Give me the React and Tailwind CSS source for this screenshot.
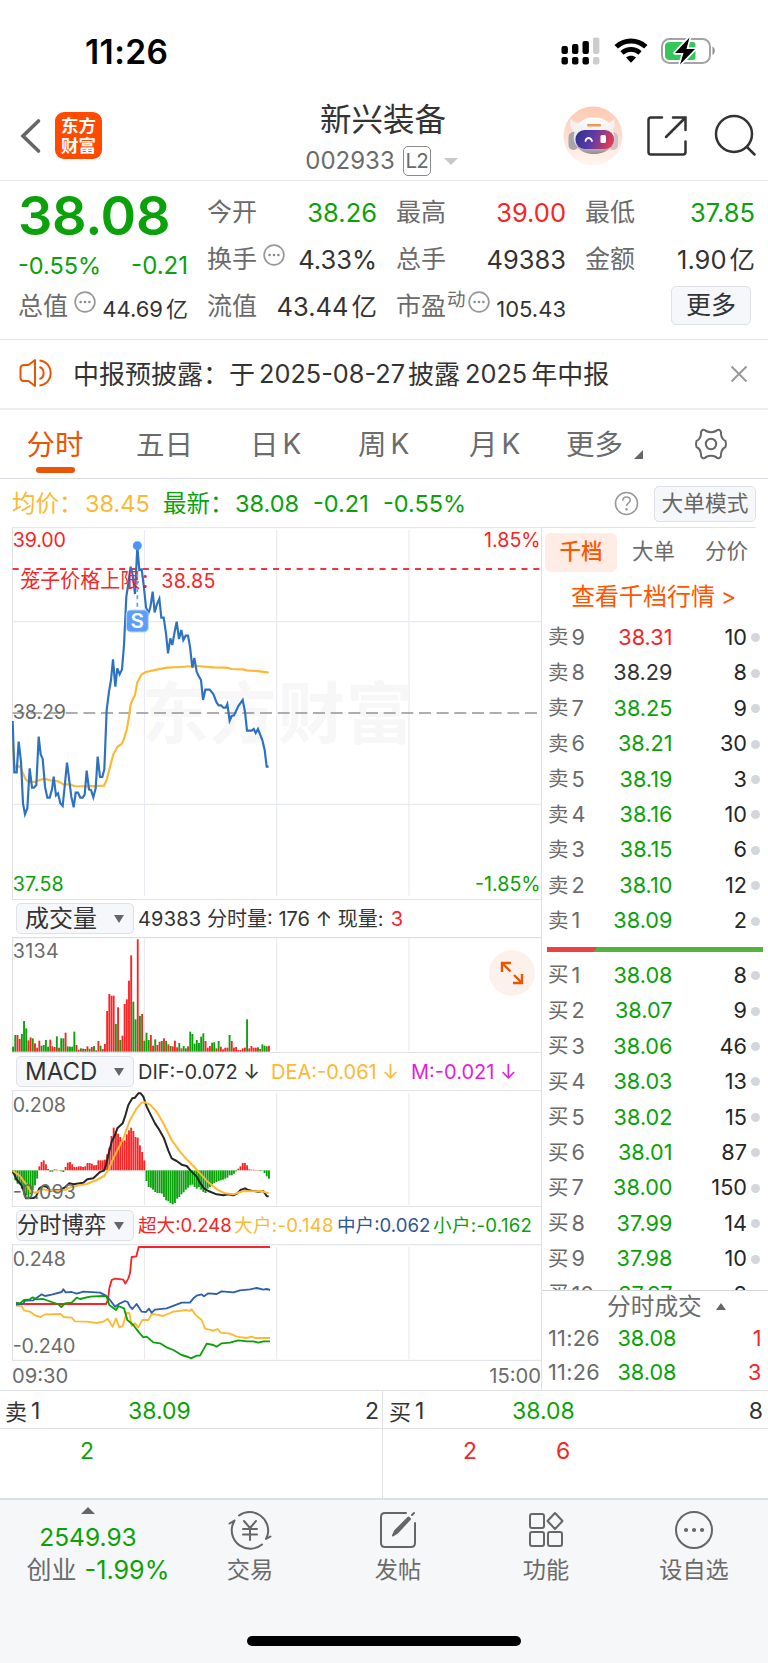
import React from "react";

const GREEN = "#0aa10a";
const RED = "#f82425";

// order book
const sells = [
  ["卖9", "38.31", "10", "text-[#f82425]"],
  ["卖8", "38.29", "8", "text-[#333333]"],
  ["卖7", "38.25", "9", "text-[#0aa10a]"],
  ["卖6", "38.21", "30", "text-[#0aa10a]"],
  ["卖5", "38.19", "3", "text-[#0aa10a]"],
  ["卖4", "38.16", "10", "text-[#0aa10a]"],
  ["卖3", "38.15", "6", "text-[#0aa10a]"],
  ["卖2", "38.10", "12", "text-[#0aa10a]"],
  ["卖1", "38.09", "2", "text-[#0aa10a]"],
];

const buys = [
  ["买1", "38.08", "8", "text-[#0aa10a]"],
  ["买2", "38.07", "9", "text-[#0aa10a]"],
  ["买3", "38.06", "46", "text-[#0aa10a]"],
  ["买4", "38.03", "13", "text-[#0aa10a]"],
  ["买5", "38.02", "15", "text-[#0aa10a]"],
  ["买6", "38.01", "87", "text-[#0aa10a]"],
  ["买7", "38.00", "150", "text-[#0aa10a]"],
  ["买8", "37.99", "14", "text-[#0aa10a]"],
  ["买9", "37.98", "10", "text-[#0aa10a]"],
  ["买10", "37.97", "8", "text-[#0aa10a]"],
];

// chart series, three units to a pixel
const priceLine =
  "38,603 43,757 50,757 56,665 63,725 69,850 75,883 82,865 89,745 96,803 102,803 109,795 116,650 122,703 128,716 135,800 142,833 149,833 156,808 161,770 168,826 174,820 181,850 188,858 194,800 201,728 207,775 214,830 221,862 227,818 234,818 241,833 248,833 254,824 260,752 267,808 273,810 280,832 287,805 293,710 300,771 307,771 313,748 320,570 327,515 333,480 339,418 346,500 352,445 359,463 366,448 372,375 379,230 385,190 392,140 398,165 405,222 412,80 418,150 425,148 431,195 438,262 445,280 451,262 458,215 464,277 471,252 478,236 484,293 491,293 498,340 504,400 511,355 517,375 524,335 530,305 537,357 544,330 550,360 557,347 564,347 570,380 577,443 583,414 590,455 597,470 603,480 609,540 616,509 629,509 640,522 650,548 656,556 663,556 670,563 677,563 682,552 689,602 695,588 702,586 715,558 728,540 735,575 741,632 755,632 761,627 767,639 774,627 787,660 794,690 800,740 806,740";
const avgLine =
  "38,665 43,735 50,745 57,738 63,745 69,760 77,778 85,785 103,786 118,780 135,776 150,781 175,784 190,793 210,793 222,798 260,799 312,797 320,780 330,740 340,703 352,681 366,671 372,655 380,630 387,590 392,553 398,538 405,525 412,487 425,463 438,456 470,449 500,443 540,441 590,438 640,442 680,443 695,447 728,448 740,451 780,454 806,458";
const difLine =
  "38,122 48,145 55,155 64,165 70,180 78,205 100,204 108,200 118,175 130,168 140,170 150,182 180,180 195,172 208,160 220,163 250,158 262,148 280,145 300,126 312,122 318,105 325,75 335,35 345,15 352,-5 368,-20 375,-40 385,-75 397,-95 405,-97 415,-110 422,-110 430,-100 440,-70 450,-50 465,-20 475,-5 492,25 505,62 515,85 530,93 545,104 560,108 572,122 590,140 600,158 612,175 625,183 650,193 670,196 685,193 700,196 712,190 722,180 735,175 742,179 755,182 775,185 790,183 800,198 806,200";
const deaLine =
  "38,122 60,138 80,165 92,185 110,188 125,178 165,183 195,180 215,170 260,162 290,150 312,138 325,120 340,85 360,45 372,20 390,-30 410,-65 425,-82 435,-83 450,-76 470,-55 490,-20 500,0 515,30 540,65 560,88 580,108 600,130 620,152 650,178 675,190 700,193 730,183 760,184 785,183 806,190";
const superLine =
  "48,522 318,522 324,510 328,475 335,450 345,446 370,449 376,461 385,445 390,430 395,381 409,379 416,351 810,351";
const midLine =
  "48,524 70,521 75,512 100,511 125,493 135,498 155,494 185,486 190,478 197,487 215,486 230,491 250,485 300,488 318,497 330,510 345,530 360,520 375,513 383,516 390,530 397,537 410,522 425,545 438,546 447,536 455,548 465,539 500,535 545,518 570,518 580,505 590,497 605,493 612,499 625,490 650,492 665,484 700,487 720,481 750,478 770,474 790,479 800,477 810,480";
const bigLine =
  "48,527 65,528 72,541 90,545 105,556 122,561 135,553 183,552 190,561 215,563 225,574 260,575 290,579 310,575 323,566 338,590 348,565 358,592 368,588 380,549 388,549 395,588 405,580 415,592 427,570 445,570 455,552 470,554 490,558 520,545 560,540 568,543 575,538 585,553 605,570 615,596 640,602 653,597 662,608 690,611 710,620 740,624 755,620 765,624 810,624";
const smallLine =
  "48,518 60,520 72,510 90,508 98,502 110,508 130,507 155,516 175,523 184,531 195,520 215,518 230,503 240,507 270,500 310,498 320,500 328,525 348,540 355,528 372,535 382,570 400,585 415,605 430,622 440,620 460,637 480,640 500,652 520,660 545,675 565,681 573,685 590,677 600,677 620,641 640,645 650,650 665,640 690,638 715,631 740,634 760,634 775,638 790,634 810,634";

// negative = falling minute, drawn green
const volume = [
  -15, -50, 50, 38, -53, -92, -70, 34, 43, -40, 25, 12, 33, -18, -20, -35, -15, 36, 16, 14, -46, 12, -40, -40, 57, -16,
  -15, -15, -60, 20, 6, -10, 9, -8, 16, -9, 14, -17, 4, 32, -18, 8, 23, 122, 173, 168, 168, -83, 133, -35, 48, 143, 157,
  213, 289, -150, -97, 337, -107, 113, -33, -57, -35, 50, 18, -37, 20, 30, -32, 40, -32, 22, -17, 16, 33, 13, -26, 10,
  -17, -10, 16, -60, -53, -24, -35, -26, -45, -55, 32, 12, 17, -27, -28, 10, -32, 15, 7, 12, 12, -50, 32, 12, 14, 5, 5,
  10, 12, -97, 10, 17, 12, 12, -13, 8, -22, -18, -16, 18,
];

const macd = [
  -10, -30, -40, -42, -55, -70, -75, -80, -72, -60, -45, -25, 12, 25, 30, 18, 4, -4, -4, 3, 2, 1, -3, -5, 10, 23, 25, 18,
  10, 10, 12, 12, 10, 12, 22, 22, 20, 15, 16, 30, 30, 30, 32, 48, 68, 103, 128, 118, 110, 100, 88, 90, 108, 120, 128,
  118, 100, 98, 75, 55, 30, -32, -50, -52, -58, -65, -68, -68, -70, -80, -90, -93, -98, -102, -98, -85, -80, -72, -66,
  -58, -52, -45, -43, -50, -55, -50, -58, -65, -68, -55, -50, -42, -38, -35, -32, -30, -28, -25, -22, -15, -15, -10, -3,
  5, 12, 22, 22, 15, 3, 2, 2, 1, 1, -2, -1, -8, -18, -25,
];

const Bars = ({ data, base }) =>
  data.map((v, i) => (
    <rect
      key={i}
      x={36.5 + i * 6.56}
      y={v > 0 ? base - v : data === volume ? base + v : base}
      width="5.6"
      height={Math.abs(v)}
      fill={v > 0 ? RED : GREEN}
    />
  ));

const Grid = ({ top, bottom }) => (
  <g stroke="#e9ebf2" strokeWidth="3.5">
    <path d={`M433.5 ${top}V${bottom}M830 ${top}V${bottom}M1227 ${top}V${bottom}`} />
  </g>
);

const Dots = () => (
  <svg width="22" height="22" viewBox="0 0 22 22" fill="none" className="shrink-0">
    <circle cx="11" cy="11" r="9.9" stroke="#999" strokeWidth="1.7" />
    <g fill="#888">
      <circle cx="6.6" cy="11" r="1.3" />
      <circle cx="11" cy="11" r="1.3" />
      <circle cx="15.4" cy="11" r="1.3" />
    </g>
  </svg>
);

const StatusBar = () => (
  <div className="flex h-[84px] items-start justify-between pl-[85px] pr-[52px]">
    <div className="mt-[36px] text-[33.5px] font-semibold leading-[33px] tracking-[0.4px] text-black">11:26</div>
    <div className="mt-[36px] flex items-start">
      <svg width="40" height="30" viewBox="0 0 40 30" className="mr-[13px]">
        <rect x="0.5" y="10" width="6.4" height="8" rx="2" />
        <rect x="11" y="8" width="6.4" height="10" rx="2" />
        <rect x="21.5" y="5" width="6.4" height="13" rx="2" />
        <rect x="32" y="1.5" width="6.4" height="16.5" rx="2" fill="#ccc" />
        <rect x="0.5" y="21" width="6.4" height="7.5" rx="2" />
        <rect x="11" y="21" width="6.4" height="7.5" rx="2" />
        <rect x="21.5" y="21" width="6.4" height="7.5" rx="2" />
        <rect x="32" y="21" width="6.4" height="7.5" rx="2" fill="#ccc" />
      </svg>
      <svg width="34" height="30" viewBox="0 0 34 30" fill="none" className="mr-[13px]">
        <path d="M2.2 10.8C10.5 3 23.5 3 31.8 10.8" stroke="#000" strokeWidth="5" />
        <path d="M8 17C13.2 12.2 20.8 12.2 26 17" stroke="#000" strokeWidth="4.6" />
        <path d="M12 21.6C14.8 19 19.2 19 22 21.6L17 26.8Z" fill="#000" />
      </svg>
      <svg width="55" height="30" viewBox="0 0 55 30">
        <rect x="1" y="3" width="48" height="24" rx="7.5" fill="none" stroke="#a3a3a3" strokeWidth="2" />
        <path d="M51.5 10.5c3 1.6 3 7 0 8.6z" fill="#8f8f8f" />
        <path d="M9 6h22.5c2.2 0 3 .8 3 3v12c0 2.2-.8 3-3 3H9c-3.2 0-5-1.3-5-4v-10c0-2.7 1.8-4 5-4z" fill="#34c759" />
        <path d="M28.5 1.5L14 17h8.5L19 28.5L34 13h-8.5z" fill="#000" stroke="#fff" strokeWidth="3.4" paintOrder="stroke" strokeLinejoin="round" />
      </svg>
    </div>
  </div>
);

const Header = () => (
  <div className="flex h-[97px] items-start border-b border-[#e8e8e8] pl-[20px]">
    <svg width="22" height="36" viewBox="0 0 22 36" fill="none" className="mt-[34px]">
      <path d="M18.5 3L3 18L18.5 33" stroke="#666" strokeWidth="3.6" strokeLinecap="round" />
    </svg>
    <div className="ml-[13px] mt-[28px] flex h-[47px] w-[47px] flex-col items-center justify-center rounded-[9px] bg-[#ff4a00] text-[17.5px] font-bold leading-[19.5px] text-white">
      <span>东方</span>
      <span>财富</span>
    </div>
    <div className="ml-[180px] mt-[20px] flex w-[202px] flex-col items-center">
      <div className="text-[31.5px] leading-[32px] text-[#333333]">新兴装备</div>
      <div className="ml-[-3px] mt-[10px] flex items-center text-[24px] leading-[30px] text-[#6b6b6b]">
        <span>002933</span>
        <span className="ml-[8px] flex h-[30px] w-[28px] items-center justify-center rounded-[5px] border border-[#8a8a8a] text-[20.5px] tracking-[-0.8px]">
          L2
        </span>
        <span className="ml-[13px] border-x-[7px] border-t-[7px] border-x-transparent border-t-[#c8c8c8]" />
      </div>
    </div>
    <svg width="60" height="60" viewBox="0 0 60 60" className="ml-[79px] mt-[22px]">
      <defs>
        <linearGradient id="halo" x1="0" y1="0" x2="0" y2="1">
          <stop offset="0" stopColor="#ffc8b0" />
          <stop offset="1" stopColor="#fff6f1" />
        </linearGradient>
        <linearGradient id="helmet" x1="0" y1="0" x2="0" y2="1">
          <stop offset="0" stopColor="#ffffff" />
          <stop offset="0.65" stopColor="#e4e2e6" />
          <stop offset="1" stopColor="#8f8a90" />
        </linearGradient>
        <linearGradient id="visor" x1="0" y1="0" x2="1" y2="0.2">
          <stop offset="0" stopColor="#2d3190" />
          <stop offset="0.5" stopColor="#5b3aa8" />
          <stop offset="1" stopColor="#dc3a55" />
        </linearGradient>
      </defs>
      <circle cx="30" cy="30" r="29.5" fill="url(#halo)" />
      <path d="M8 13c-2 6 0 11 5 13l7-9c-5 1-9 0-12-4zM51 13c2 6 0 11-5 13l-7-9c5 1 9 0 12-4z" fill="#f6f2f1" />
      <rect x="5.5" y="26" width="10" height="18" rx="5" fill="#aaa5aa" />
      <rect x="45" y="26" width="10" height="18" rx="5" fill="#c9c3c5" />
      <path d="M31 11.500c-12 0-18 6-20 17c-2 12 8 19.500 20 19.500s22-7.500 20-19.500c-2-11-8-17-20-17z" fill="url(#helmet)" />
      <rect x="24" y="18" width="14" height="2.6" rx="1.3" fill="#eb9a52" />
      <rect x="12.5" y="24" width="38.500" height="19" rx="9" fill="url(#visor)" />
      <path d="M22.5 35c1-4 5-4 6.5 0" fill="none" stroke="#fff" strokeWidth="1.8" strokeLinecap="round" />
      <rect x="37.500" y="29" width="5.500" height="8" rx="1.5" fill="#fff" />
    </svg>
    <svg width="42" height="42" viewBox="0 0 42 42" fill="none" stroke="#333" strokeWidth="2.5" strokeLinecap="round" className="ml-[23px] mt-[31px]">
      <path d="M16 2.5H5Q2.5 2.500 2.5 5V37Q2.5 39.500 5 39.500H37Q39.500 39.500 39.500 37V26.500M27 2.500H39.500V15M39 3L20 22" />
    </svg>
    <svg width="44" height="44" viewBox="0 0 44 44" fill="none" stroke="#333" strokeWidth="2.5" strokeLinecap="round" className="ml-[26px] mt-[30px]">
      <circle cx="20" cy="20" r="18" />
      <path d="M33 33L40.500 40.500" />
    </svg>
  </div>
);

const Cell = ({ label, value, unit, color = "text-[#333333]", children, small }) => (
  <div className="flex h-[47px] items-center justify-between whitespace-nowrap">
    <div className="flex items-center text-[25px] text-[#6b6b6b]">
      {label}
      {children}
    </div>
    <div className={small ? `pt-[5px] text-[22px] ${color}` : `text-[25.5px] ${color}`}>
      {value}
      {unit && <span className="ml-[3px]">{unit}</span>}
    </div>
  </div>
);

const Quote = () => (
  <div className="grid h-[159px] grid-cols-[170px_170px_170px_170px] gap-x-[19px] border-b border-[#e4e4e4] pl-[18px] pt-[8px] leading-none">
    <div>
      <div className="h-[56px] text-[54px] font-semibold leading-[54px] tracking-[-0.3px] text-[#0aa10a]">38.08</div>
      <div className="flex h-[38px] items-center justify-between pt-[4px] text-[24px] text-[#0aa10a]">
        <span className="text-[23.5px]">-0.55%</span>
        <span>-0.21</span>
      </div>
      <Cell label="总值" value="44.69" unit="亿" small>
        <span className="mb-[9px] ml-[6px]"><Dots /></span>
      </Cell>
    </div>
    <div>
      <Cell label="今开" value="38.26" color="text-[#0aa10a]" />
      <Cell label="换手" value="4.33%">
        <span className="mb-[9px] ml-[6px]"><Dots /></span>
      </Cell>
      <Cell label="流值" value="43.44" unit="亿" />
    </div>
    <div>
      <Cell label="最高" value="39.00" color="text-[#f82425]" />
      <Cell label="总手" value="49383" />
      <Cell label="市盈" value="105.43" small>
        <span className="mb-[14px] ml-px text-[18.5px]">动</span>
        <span className="mb-[9px] ml-[2px]"><Dots /></span>
      </Cell>
    </div>
    <div>
      <Cell label="最低" value="37.85" color="text-[#0aa10a]" />
      <Cell label="金额" value="1.90" unit="亿" />
      <button className="ml-[86px] mt-[3px] flex h-[39px] w-[80px] items-center justify-center rounded-[5px] border border-[#dfe1e8] bg-[#f6f7fa] text-[25px] text-[#333333]">
        更多
      </button>
    </div>
  </div>
);

const Notice = () => (
  <div className="flex h-[70px] items-center border-b-2 border-[#eeeeee] pl-[19px] text-[25px] text-[#333333]">
    <svg width="34" height="30" viewBox="0 0 34 30" fill="none" stroke="#ea5504" strokeWidth="2" strokeLinejoin="round" className="mt-[-2px]">
      <path d="M16 2v26l-6.5-5H5Q1.5 23 1.5 19.500V10.500Q1.5 7 5 7H9.500Z" />
      <path d="M20.5 9c5.500 1.500 5.500 10.500 0 12M20.5 2.500c15 2 15 23 0 25" />
    </svg>
    <div className="ml-[20px] flex items-center whitespace-nowrap text-[26px]">
      <span>中报预披露：于</span>
      <span className="ml-[4px] text-[25.3px]">2025-08-27</span>
      <span className="ml-[3px]">披露</span>
      <span className="ml-[5px] text-[25.3px]">2025</span>
      <span className="ml-[4px]">年中报</span>
    </div>
    <svg width="18" height="18" viewBox="0 0 18 18" stroke="#999" strokeWidth="2" className="ml-auto mr-[20px]">
      <path d="M1.500 1.500L16.500 16.500M16.500 1.500L1.500 16.500" />
    </svg>
  </div>
);

const tabs = [
  { label: "五日", box: "ml-[52px] w-[57px]" },
  { label: "日", k: true, box: "ml-[57px] w-[53px]" },
  { label: "周", k: true, box: "ml-[55px] w-[53px]" },
  { label: "月", k: true, box: "ml-[58px] w-[53px]" },
];

const Tabs = () => (
  <div className="flex h-[69px] items-start border-b border-[#dcdce4] pl-[26px] pt-[20px] text-[28.5px] leading-[29px] text-[#6b6b6b]">
    <div className="flex w-[58px] flex-col items-center text-[#ea5504]">
      <span className="whitespace-nowrap">分时</span>
      <span className="mt-[8px] h-[6px] w-[39px] rounded-full bg-[#ea5504]" />
    </div>
    {tabs.map((t) => (
      <div key={t.label} className={`flex items-center whitespace-nowrap ${t.box}`}>
        {t.label}
        {t.k && <span className="ml-[4px] text-[28px]">K</span>}
      </div>
    ))}
    <div className="ml-[44px] w-[58px]">更多</div>
    <svg width="9" height="9" viewBox="0 0 9 9" className="ml-[10px] mt-[20px]">
      <path d="M9 0V9H0z" fill="#666" />
    </svg>
    <svg width="34" height="34" viewBox="-17 -17 34 34" fill="none" stroke="#666" strokeWidth="2" strokeLinejoin="round" className="ml-[51px] mt-[-3px]">
      <circle r="5.2" />
      <path d="M-8.5 -14Q-6.5 -14.7 -5 -13Q0 -10.5 5 -13Q6.5 -14.7 8.5 -14Q10.5 -12.5 10 -10Q10.5 -5 14.5 -3Q15.5 0 14.5 3Q10.5 5 10 10Q10.5 12.5 8.5 14Q6.5 14.7 5 13Q0 10.5 -5 13Q-6.5 14.7 -8.5 14Q-10.5 12.5 -10 10Q-10.5 5 -14.5 3Q-15.5 0 -14.5 -3Q-10.5 -5 -10 -10Q-10.5 -12.5 -8.5 -14Z" />
    </svg>
  </div>
);

const Legend = () => (
  <div className="flex h-[48px] items-center whitespace-nowrap pl-[12px] pr-[12px] pt-px text-[23.5px] text-[#0aa10a]">
    <span className="w-[73px] text-[#fdb933]">均价：</span>
    <span className="w-[78px] text-[#fdb933]">38.45</span>
    <span className="w-[72px]">最新：</span>
    <span className="w-[78px]">38.08</span>
    <span className="w-[70px]">-0.21</span>
    <span>-0.55%</span>
    <svg width="25" height="25" viewBox="0 0 25 25" fill="none" className="ml-auto mr-[15px]">
      <circle cx="12.5" cy="12.5" r="11" stroke="#999" strokeWidth="1.6" />
      <path d="M8.8 9.8c0-5 7.4-5 7.4-.6c0 3-3.700 2.800-3.700 5.800" stroke="#999" strokeWidth="1.6" />
      <circle cx="12.5" cy="18.300" r="1.2" fill="#999" />
    </svg>
    <button className="flex h-[36px] w-[102px] items-center justify-center rounded-[5px] border border-[#dfe1e8] bg-[#f6f7fa] text-[21.7px] text-[#666666]">
      大单模式
    </button>
  </div>
);

const IndicatorRow = ({ name, children, tight }) => (
  <div className="flex h-[38px] items-center whitespace-nowrap border-t border-[#e0e2e8] pl-[4px] text-[20px] text-[#333333]">
    <button className={`flex h-[31px] w-[118px] shrink-0 items-center justify-between rounded-[5px] border border-[#dfe1e8] bg-[#f6f7fa] pr-[9px] ${tight ? "text-[22.3px]" : "pl-[8px] text-[24px]"}`}>
      <span className="leading-none">{name}</span>
      <span className="border-x-[5px] border-t-[8px] border-x-transparent border-t-[#666]" />
    </button>
    {children}
  </div>
);

const LeftCharts = () => (
  <div className="w-[542px] shrink-0 border-r border-[#dfe0e8] pl-[12px]">
    <svg width="529" height="372" viewBox="36 21 1587 1116" fill="none" className="block" fontSize="59">
      <path d="M36 23H1623M37.5 22V1137" stroke="#e2e3ea" strokeWidth="3" />
      <Grid top={30} bottom={1127} />
      <path d="M38 305H1623M38 853H1623" stroke="#e9ebf2" strokeWidth="3.5" />
      <text x="424" y="655" fontSize="202" fontWeight="700" fill="#f7f7f8" textLength="816">东方财富</text>
      <path d="M38 579H1623" stroke="#949494" strokeWidth="4" strokeDasharray="36 17" />
      <path d="M38 147H1623" stroke="#f23440" strokeWidth="6" strokeDasharray="18 17.5" />
      <text x="38" y="81" fill={RED} textLength="160">39.00</text>
      <text x="1622" y="81" fill={RED} textAnchor="end">1.85%</text>
      <text x="38" y="597" fill="#6b6b6b" textLength="160">38.29</text>
      <text x="38" y="1112" fill={GREEN} textLength="153">37.58</text>
      <text x="1622" y="1112" fill={GREEN} textAnchor="end">-1.85%</text>
      <polyline points={avgLine} stroke="#fdb933" strokeWidth="6.5" strokeLinejoin="round" />
      <polyline points={priceLine} stroke="#2c72c0" strokeWidth="6.5" />
      <text x="61" y="203" fill={RED} fontSize="60">笼子价格上限：</text>
      <text x="484" y="203" fill={RED} textLength="162">38.85</text>
      <circle cx="412" cy="77" r="13.5" fill="#4a96f6" />
      <path d="M412 160V270" stroke="#5a9ff8" strokeWidth="5" strokeDasharray="12 10" />
      <rect x="379" y="270" width="66" height="66" rx="13" fill="#5b9df9" stroke="#bcd8fd" strokeWidth="3" />
      <text x="412" y="325" fill="#fff" fontSize="62" fontWeight="600" textAnchor="middle">S</text>
    </svg>

    <IndicatorRow name="成交量">
      <span className="ml-[4px] w-[69px] tracking-[0.2px]">49383</span>
      <span>分时量: 176 ↑ 现量:</span>
      <span className="ml-[7px] text-[#f82425]">3</span>
    </IndicatorRow>
    <div className="relative">
      <svg width="529" height="115" viewBox="36 110 1587 345" fill="none" className="block" fontSize="59">
        <path d="M36 112H1623M37.5 110V455" stroke="#dcdee6" strokeWidth="4" />
        <Grid top={115} bottom={453} />
        <Bars data={volume} base={454} />
        <text x="38" y="174" fill="#6b6b6b" textLength="138">3134</text>
      </svg>
      <div className="absolute right-[6px] top-[13px] flex h-[46px] w-[46px] items-center justify-center rounded-full bg-[#fdf1eb]">
        <svg width="24" height="24" viewBox="0 0 24 24" fill="none" stroke="#ea5504" strokeWidth="2.4">
          <path d="M11 2H2V11M2.500 2.500L10.500 10.500M13 22H22V13M21.500 21.500L14 14" />
        </svg>
      </div>
    </div>

    <IndicatorRow name="MACD">
      <span className="ml-[4px] w-[133px]">DIF:-0.072 ↓</span>
      <span className="w-[140px] text-[#fdb933]">DEA:-0.061 ↓</span>
      <span className="text-[#e01ee0]">M:-0.021 ↓</span>
    </IndicatorRow>
    <svg width="529" height="116" viewBox="36 -120 1587 348" fill="none" className="block" fontSize="59">
      <path d="M36 -118H1623M37.5 -118V228" stroke="#e2e3ea" strokeWidth="3" />
      <Grid top={-111} bottom={225} />
      <Bars data={macd} base={121} />
      <polyline points={difLine} stroke="#262626" strokeWidth="6" strokeLinejoin="round" />
      <polyline points={deaLine} stroke="#fdb933" strokeWidth="6" strokeLinejoin="round" />
      <text x="38" y="-54" fill="#6b6b6b" textLength="160">0.208</text>
      <text x="38" y="206" fill="#6b6b6b" textLength="190">-0.093</text>
    </svg>

    <IndicatorRow name="分时博弈" tight>
      <span className="ml-[4px] w-[96px] text-[18.6px]">
        <span className="text-[#f82425]">超大:0.248</span>
      </span>
      <span className="w-[103px] text-[18.6px] tracking-[0.3px] text-[#fdb933]">大户:-0.148</span>
      <span className="w-[96px] text-[18.6px] text-[#2f5597]">中户:0.062</span>
      <span className="text-[18.6px] tracking-[0.3px] text-[#0aa10a]">小户:-0.162</span>
    </IndicatorRow>
    <svg width="529" height="117" viewBox="36 342 1587 351" fill="none" className="block" fontSize="59">
      <path d="M36 344H1623M37.5 344V691M36 691H1623" stroke="#dcdfe6" strokeWidth="3" />
      <Grid top={351} bottom={688} />
      <g strokeWidth="5.5" strokeLinejoin="round">
        <polyline points={superLine} stroke={RED} />
        <polyline points={bigLine} stroke="#fdb933" />
        <polyline points={midLine} stroke="#2f5fa8" />
        <polyline points={smallLine} stroke={GREEN} />
      </g>
      <text x="38" y="408" fill="#6b6b6b" textLength="160">0.248</text>
      <text x="38" y="669" fill="#6b6b6b" textLength="188">-0.240</text>
    </svg>
    <div className="flex h-[29px] items-center justify-between pt-px text-[20.2px] leading-none text-[#6b6b6b]">
      <span>09:30</span>
      <span>15:00</span>
    </div>
  </div>
);

const BookRow = ({ row }) => (
  <div className="flex h-[35.44px] shrink-0 items-center text-[21.7px] leading-none">
    <span className="flex w-[54px] items-center whitespace-nowrap text-[#6b6b6b]">
      <span className="text-[20.5px]">{row[0][0]}</span>
      <span className="ml-[3px]">{row[0].slice(1)}</span>
    </span>
    <span className={`w-[70.5px] text-right ${row[3]}`}>{row[1]}</span>
    <span className="w-[74.5px] text-right text-[#262626]">{row[2]}</span>
    <span className="ml-[4px] h-[9px] w-[9px] rounded-full bg-[#d3d6dc]" />
  </div>
);

const OrderBook = () => (
  <div className="flex h-[863px] w-[226px] flex-col">
    <div className="mr-[12px] border-t border-[#e2e3ea]" />
    <div className="flex h-[43px] items-center pl-[3px] pt-[5px] text-[21.5px] leading-none text-[#6b6b6b]">
      <span className="flex h-[39px] w-[72px] items-center justify-center rounded-[6px] bg-[#ffece4] font-medium text-[#ff5500]">千档</span>
      <span className="ml-[15px]">大单</span>
      <span className="ml-[30px]">分价</span>
    </div>
    <div className="flex h-[49px] items-center pl-[29px] pt-[3px] text-[24px] leading-none text-[#ff5500]">
      查看千档行情<span className="ml-[6px] text-[23px]">&gt;</span>
    </div>
    <div className="flex h-[670px] shrink-0 flex-col overflow-hidden pl-[6px]">
      {sells.map((r) => <BookRow key={r[0]} row={r} />)}
      <div className="mb-[6px] mt-[8px] flex h-[5px] w-[216px] shrink-0 -translate-x-px bg-[#52b43c]">
        <span className="h-full w-[50px] bg-[#ea4242] [clip-path:polygon(0_0,100%_0,93%_100%,0_100%)]" />
      </div>
      {buys.map((r) => <BookRow key={r[0]} row={r} />)}
    </div>
    <div className="border-t border-[#d5d7df] pl-[6px] text-[21.7px] leading-none">
      <div className="flex h-[31px] items-center pl-[59px] text-[23.7px] text-[#6b6b6b]">
        分时成交
        <span className="ml-[14px] border-x-[5.5px] border-b-[7px] border-x-transparent border-b-[#666]" />
      </div>
      {["1", "3"].map((n) => (
        <div key={n} className="flex h-[34px] items-center">
          <span className="w-[58px] tracking-[0.3px] text-[#6b6b6b]">11:26</span>
          <span className="w-[70.5px] text-right text-[#0aa10a]">38.08</span>
          <span className="w-[85px] text-right text-[#f82425]">{n}</span>
        </div>
      ))}
    </div>
  </div>
);

const BestQuotes = () => (
  <div className="grid h-[108px] grid-cols-[383px_385px] border-t border-[#dfe0e6] text-[23px] leading-none">
    <div className="border-r border-[#dfe0e6]">
      <div className="flex h-[38px] items-center border-b border-[#dfe0e6] pl-[5px] pr-[3px] pt-[4px] text-[#333333]">
        <span className="flex w-[123px] items-center"><span className="mr-[4px] text-[22px]">卖</span>1</span>
        <span className="text-[#0aa10a]">38.09</span>
        <span className="ml-auto">2</span>
      </div>
      <div className="flex h-[44px] items-center pl-[80px] text-[#0aa10a]">2</div>
    </div>
    <div>
      <div className="flex h-[38px] items-center border-b border-[#dfe0e6] pl-[6px] pr-[5px] pt-[4px] text-[#333333]">
        <span className="flex w-[123px] items-center"><span className="mr-[4px] text-[22px]">买</span>1</span>
        <span className="text-[#0aa10a]">38.08</span>
        <span className="ml-auto">8</span>
      </div>
      <div className="flex h-[44px] items-center pl-[80px] text-[#f82425]">
        <span className="w-[93px]">2</span>
        <span>6</span>
      </div>
    </div>
  </div>
);

const navItems = [
  {
    label: "交易",
    icon: (
      <>
        <path d="M-11 -14.5A18.5 18.5 0 0 1 17.5 5.5L16 9L20.5 6.5M12 14.5A18.5 18.5 0 0 1 -17.5 -5L-15.5 -9.5L-20.5 -6.5" />
        <path d="M-6 -9L0 -2L6 -9M0 -2V10M-7 -1H7M-7 4.5H7" />
      </>
    ),
  },
  {
    label: "发帖",
    icon: (
      <>
        <path d="M8 -17H-13Q-17 -17 -17 -13V13Q-17 17 -13 17H13Q17 17 17 13V-7" />
        <path d="M-5 5.5L-3 1L10.5 -12.5L12 -11L-1 3ZM14 -15L16 -17" fill="#666" />
      </>
    ),
  },
  {
    label: "功能",
    icon: (
      <>
        <rect x="-16" y="-16" width="14" height="14" rx="2" />
        <rect x="-16" y="2" width="14" height="14" rx="2" />
        <rect x="2" y="2" width="14" height="14" rx="2" />
        <path d="M9 -17L16.5 -9L9 -1L1.5 -9Z" />
      </>
    ),
  },
  {
    label: "设自选",
    icon: (
      <>
        <circle r="18" />
        <path d="M-8 0h.1M0 0h.1M8 0h.1" strokeWidth="4" />
      </>
    ),
  },
];

const BottomNav = () => (
  <div className="h-[165px] border-t-2 border-[#dcdfe4] bg-[#f6f7f9] leading-none">
    <div className="flex h-[136px]">
      <div className="flex w-[176px] flex-col items-center pt-[7px] text-[24.5px] text-[#0aa10a]">
        <span className="border-x-[7px] border-b-[7px] border-x-transparent border-b-[#666]" />
        <span className="mt-[11px]">2549.93</span>
        <span className="ml-[20px] mt-[8px] flex items-center whitespace-nowrap text-[25.2px]">
          <span className="mr-[8px] text-[25px] text-[#6b6b6b]">创业</span>-1.99%
        </span>
      </div>
      {navItems.map((item) => (
        <div key={item.label} className="flex w-[148px] flex-col items-center pt-[8px]">
          <svg width="44" height="44" viewBox="-22 -22 44 44" fill="none" stroke="#666" strokeWidth="2" strokeLinecap="round" strokeLinejoin="round">
            {item.icon}
          </svg>
          <span className="mt-[7px] text-[23.2px] text-[#6b6b6b]">{item.label}</span>
        </div>
      ))}
    </div>
    <div className="mx-auto h-[10px] w-[274px] rounded-full bg-black" />
  </div>
);

const App = () => {
  return (
    <div className="h-[1663px] w-[768px] overflow-hidden bg-white font-['Inter','Noto_Sans_CJK_SC',sans-serif]">
      <StatusBar />
      <Header />
      <Quote />
      <Notice />
      <Tabs />
      <Legend />
      <div className="flex h-[863px]">
        <LeftCharts />
        <OrderBook />
      </div>
      <BestQuotes />
      <BottomNav />
    </div>
  );
};

export default App;
